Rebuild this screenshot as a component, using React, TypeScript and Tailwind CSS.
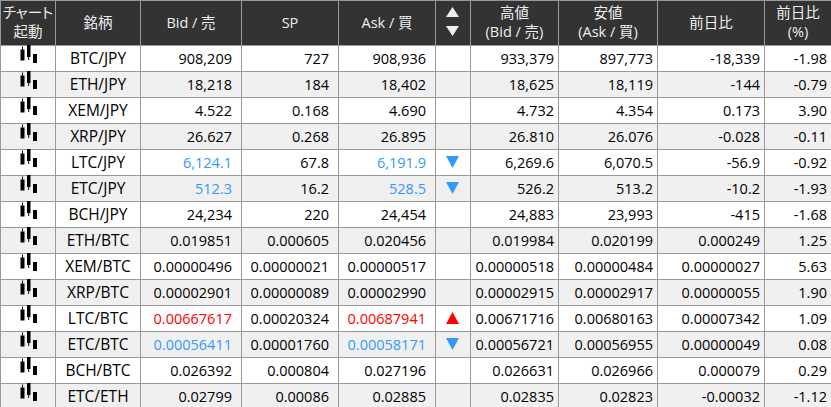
const rows: [string, string, string, string, string, string, string, string, string][] = [
  ['BTC/JPY', '908,209', '727', '908,936', '933,379', '897,773', '-18,339', '-1.98', ''],
  ['ETH/JPY', '18,218', '184', '18,402', '18,625', '18,119', '-144', '-0.79', ''],
  ['XEM/JPY', '4.522', '0.168', '4.690', '4.732', '4.354', '0.173', '3.90', ''],
  ['XRP/JPY', '26.627', '0.268', '26.895', '26.810', '26.076', '-0.028', '-0.11', ''],
  ['LTC/JPY', '6,124.1', '67.8', '6,191.9', '6,269.6', '6,070.5', '-56.9', '-0.92', 'down'],
  ['ETC/JPY', '512.3', '16.2', '528.5', '526.2', '513.2', '-10.2', '-1.93', 'down'],
  ['BCH/JPY', '24,234', '220', '24,454', '24,883', '23,993', '-415', '-1.68', ''],
  ['ETH/BTC', '0.019851', '0.000605', '0.020456', '0.019984', '0.020199', '0.000249', '1.25', ''],
  ['XEM/BTC', '0.00000496', '0.00000021', '0.00000517', '0.00000518', '0.00000484', '0.00000027', '5.63', ''],
  ['XRP/BTC', '0.00002901', '0.00000089', '0.00002990', '0.00002915', '0.00002917', '0.00000055', '1.90', ''],
  ['LTC/BTC', '0.00667617', '0.00020324', '0.00687941', '0.00671716', '0.00680163', '0.00007342', '1.09', 'up'],
  ['ETC/BTC', '0.00056411', '0.00001760', '0.00058171', '0.00056721', '0.00056955', '0.00000049', '0.08', 'down'],
  ['BCH/BTC', '0.026392', '0.000804', '0.027196', '0.026631', '0.026966', '0.000079', '0.29', ''],
  ['ETC/ETH', '0.02799', '0.00086', '0.02885', '0.02835', '0.02823', '-0.00032', '-1.12', ''],
];

const widths = ['w-[55px]', 'w-[85px]', 'w-[101px]', 'w-[97px]', 'w-[97px]', 'w-[35px]', 'w-[88px]', 'w-[99px]', 'w-[107px]', 'w-[67px]'];

const CandleIcon = () => (
  <svg width="17" height="20" viewBox="0 0 17 20" className="block mx-auto -mt-1.5 mb-0.5" fill="#000">
    <rect x="0.5" y="4.5" width="4" height="11" />
    <rect x="2" y="1.5" width="1" height="3" />
    <rect x="7" y="0" width="3.5" height="12" />
    <rect x="8.2" y="12" width="1" height="3" />
    <rect x="13" y="9" width="4" height="9" />
  </svg>
);

const Triangle = ({ dir, color, h = 12 }: { dir: 'up' | 'down'; color: string; h?: number }) => (
  <svg width="13" height={h} viewBox={`0 0 13 ${h}`} className="block mx-auto" fill={color}>
    <polygon points={dir === 'up' ? `6.5,0 13,${h} 0,${h}` : `0,0 13,0 6.5,${h}`} />
  </svg>
);

const th = 'border border-[#999] bg-[#333] text-[#eee] font-normal text-[14.5px] leading-[19px] text-center pt-0 px-0 pb-[2px]';
const td = 'border border-[#999] text-right text-[14.5px] pl-0 py-0 h-[26px] leading-[17px]';

export default function App() {
  return (
    <div className="h-[407px] w-[831px] overflow-hidden bg-white text-black font-['Open_Sans','Noto_Sans_CJK_JP',sans-serif]">
      <table className="w-[832px] table-fixed border-collapse">
        <colgroup>
          {widths.map((w, i) => (
            <col key={i} className={w} />
          ))}
        </colgroup>
        <thead>
          <tr className="h-[45px]">
            <th className={th + " [font-feature-settings:'palt']"}>
              チャート
              <br />
              起動
            </th>
            <th className={th}>銘柄</th>
            <th className={th}>Bid / 売</th>
            <th className={th}>SP</th>
            <th className={th}>Ask / 買</th>
            <th className={th + ' pr-[2px] !pb-[4px]'}>
              <div className="flex flex-col items-center gap-[9px]">
                <Triangle dir="up" color="#eee" h={10} />
                <Triangle dir="down" color="#eee" h={10} />
              </div>
            </th>
            <th className={th}>
              高値
              <br />
              (Bid / 売)
            </th>
            <th className={th}>
              安値
              <br />
              (Ask / 買)
            </th>
            <th className={th}>前日比</th>
            <th className={th}>
              前日比
              <br />
              (%)
            </th>
          </tr>
        </thead>
        <tbody>
          {rows.map((r, i) => {
            const arrow = r[8];
            const color = arrow === 'up' ? 'text-[#f00]' : arrow === 'down' ? 'text-[#39f]' : '';
            return (
              <tr key={r[0]} className={i % 2 === 1 ? 'bg-[#f0f0f0]' : 'bg-white'}>
                <td className={td}>
                  <CandleIcon />
                </td>
                <td className={td + ' !text-center text-[15.5px]'}>{r[0]}</td>
                <td className={td + ' pr-[9px] ' + color}>{r[1]}</td>
                <td className={td + ' pr-[9px]'}>{r[2]}</td>
                <td className={td + ' pr-[9px] ' + color}>{r[3]}</td>
                <td className={td + ' pr-[2px] pb-[2px]'}>
                  {arrow === 'up' && <Triangle dir="up" color="#f00" />}
                  {arrow === 'down' && <Triangle dir="down" color="#39f" />}
                </td>
                <td className={td + ' pr-[4px]'}>{r[4]}</td>
                <td className={td + ' pr-[4px]'}>{r[5]}</td>
                <td className={td + ' pr-[4px]'}>{r[6]}</td>
                <td className={td + ' pr-[4px]'}>{r[7]}</td>
              </tr>
            );
          })}
        </tbody>
      </table>
    </div>
  );
}
